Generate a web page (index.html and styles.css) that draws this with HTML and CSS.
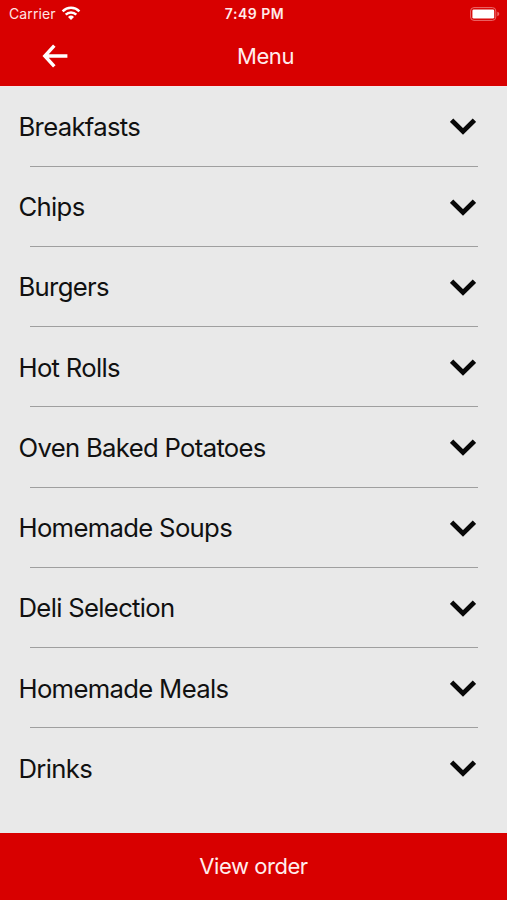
FILE: index.html
```html
<!DOCTYPE html>
<html lang="en">
<head>
	<meta charset="UTF-8">
	<title>Menu</title>
	<link rel="stylesheet" href="styles.css">
</head>
<body>
	<div class="header">
		<div class="status">
			<div class="carrier">
				<span>Carrier</span>
				<svg class="wifi" width="20" height="15" viewBox="0 0 20 15" fill="none" stroke="#fff" stroke-width="2.5">
					<path d="M1.6 5.3a12 12 0 0 1 16.8 0"/>
					<path d="M4.7 8.6a7.6 7.6 0 0 1 10.6 0"/>
					<path d="M7 11a4.3 4.3 0 0 1 6 0L10 14z" fill="#fff" stroke="none"/>
				</svg>
			</div>
			<div class="time">7:49 PM</div>
			<svg class="battery" width="30" height="14" viewBox="0 0 30 14">
				<rect x=".6" y=".6" width="25.2" height="12.8" rx="3.4" fill="none" stroke="#ec6c6c"/>
				<rect x="2.4" y="2.4" width="21.8" height="9.2" rx="1.4" fill="#fff"/>
				<path d="M27.3 4.8q2 .6 2 2.2t-2 2.2z" fill="#ec6c6c"/>
			</svg>
		</div>
		<div class="nav">
			<svg class="back" width="26" height="24" viewBox="0 0 26 24" fill="none" stroke="#fff" stroke-width="3.4">
				<path d="M12.3 1.6L2.8 12l9.5 10.4M2.8 12H25.4"/>
			</svg>
			<h1 class="title">Menu</h1>
		</div>
	</div>
	<ul class="list">
		<li><span>Breakfasts</span><svg class="arrow" viewBox="0 0 26 17"><path d="M1.6 2.2L13 13.4 24.4 2.2"/></svg></li>
		<li><span>Chips</span><svg class="arrow" viewBox="0 0 26 17"><path d="M1.6 2.2L13 13.4 24.4 2.2"/></svg></li>
		<li><span>Burgers</span><svg class="arrow" viewBox="0 0 26 17"><path d="M1.6 2.2L13 13.4 24.4 2.2"/></svg></li>
		<li><span>Hot Rolls</span><svg class="arrow" viewBox="0 0 26 17"><path d="M1.6 2.2L13 13.4 24.4 2.2"/></svg></li>
		<li><span>Oven Baked Potatoes</span><svg class="arrow" viewBox="0 0 26 17"><path d="M1.6 2.2L13 13.4 24.4 2.2"/></svg></li>
		<li><span>Homemade Soups</span><svg class="arrow" viewBox="0 0 26 17"><path d="M1.6 2.2L13 13.4 24.4 2.2"/></svg></li>
		<li><span>Deli Selection</span><svg class="arrow" viewBox="0 0 26 17"><path d="M1.6 2.2L13 13.4 24.4 2.2"/></svg></li>
		<li><span>Homemade Meals</span><svg class="arrow" viewBox="0 0 26 17"><path d="M1.6 2.2L13 13.4 24.4 2.2"/></svg></li>
		<li><span>Drinks</span><svg class="arrow" viewBox="0 0 26 17"><path d="M1.6 2.2L13 13.4 24.4 2.2"/></svg></li>
	</ul>
	<a class="order" href="#">View order</a>
</body>
</html>
```
FILE: styles.css
```css
*{margin:0;padding:0;box-sizing:border-box;list-style:none;text-decoration:none;}
body{height:900px;display:flex;flex-direction:column;background:#e9e9e9;color:#111;font-family:Inter,"Liberation Sans",sans-serif;overflow:hidden;}
svg{display:block;flex:none;}

.header{height:86px;background:#d80000;color:#fff;}
.status{height:27px;padding:0 7px 0 9px;display:grid;grid-template-columns:1fr auto 1fr;align-items:center;font-size:14px;}
.carrier{display:flex;align-items:center;gap:5px;color:#ffe4e4;letter-spacing:.1px;}
.wifi{margin-top:-1px;}
.time{font-weight:600;letter-spacing:.5px;color:#ffeaea;}
.battery{justify-self:end;}
.nav{height:58px;padding:0 18px 0 42px;display:grid;grid-template-columns:1fr auto 1fr;align-items:center;}
.title{font-size:22px;font-weight:400;letter-spacing:-.4px;color:#ffeded;}

.list{flex:1;padding-top:.5px;border-top:1px solid #f6e6ea;}
.list li{height:80.23px;padding:0 31px .3px 18.5px;display:flex;justify-content:space-between;align-items:center;font-size:25.7px;letter-spacing:-.69px;background:linear-gradient(#9f9f9f,#9f9f9f) 30px 100%/448px 1px no-repeat;}
.list li:first-child{height:79.25px;padding-bottom:1.4px;}
.list li:last-child{background:none;}
.arrow{width:26px;height:17px;margin-top:1px;fill:none;stroke:#080808;stroke-width:4.8;}

.order{height:67px;padding-bottom:1px;display:flex;justify-content:center;align-items:center;background:#d80000;color:#ffeded;font-size:22px;letter-spacing:-.45px;}
```
